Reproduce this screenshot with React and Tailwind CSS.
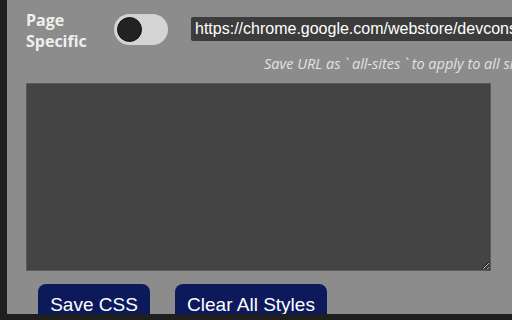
export default function App() {
  return (
    <div className="w-[512px] h-[320px] bg-[#1f1f1f] flex overflow-hidden">
      {/* Panel */}
      <div className="ml-[7px] mb-[6px] w-[505px] shrink-0 bg-[#8c8c8c] overflow-hidden flex flex-col">
        {/* URL row */}
        <div className="flex items-start pt-[10px] pl-[19px] shrink-0">
          <div className="w-[88px] shrink-0 text-[16px] leading-[21px] font-bold text-[#efefef] font-['Open_Sans',sans-serif]">
            Page
            <br />
            Specific
          </div>
          <div className="mt-[4px] w-[54px] h-[31px] rounded-full bg-[#d4d4d4] flex items-center pl-[3px] shrink-0">
            <div className="w-[25px] h-[25px] rounded-full bg-[#222] border border-[#111]" />
          </div>
          <div className="ml-[23px] mt-[7px] w-[420px] h-[24px] shrink-0 bg-[#3c3c3c] rounded-[2px] pl-[4px] text-[16px] leading-[24px] text-white whitespace-nowrap font-['Liberation_Sans',Arial,sans-serif]">
            https://chrome.google.com/webstore/devconsole
          </div>
        </div>

        {/* Help */}
        <div className="pl-[257px] mt-[2px] text-[14.5px] italic leading-[19px] text-[#e2e2e2] whitespace-nowrap font-['Open_Sans',sans-serif]">
          Save URL as ` all-sites ` to apply to all sites
        </div>

        {/* CSS editor */}
        <div className="pl-[19px] mt-[10px] shrink-0">
          <textarea className="block w-[465px] h-[188px] bg-[#444] border border-[#5a5a5a] text-white resize" />
        </div>

        {/* Buttons */}
        <div className="flex gap-[25px] pl-[31px] mt-[13px] shrink-0">
          <button className="w-[112px] h-[44px] rounded-[8px] bg-[#0c1a5c] text-white text-[19px] pb-[1px] font-['Liberation_Sans',Arial,sans-serif]">
            Save CSS
          </button>
          <button className="w-[152px] h-[44px] rounded-[8px] bg-[#0c1a5c] text-white text-[19px] pb-[1px] font-['Liberation_Sans',Arial,sans-serif]">
            Clear All Styles
          </button>
        </div>
      </div>
    </div>
  );
}
